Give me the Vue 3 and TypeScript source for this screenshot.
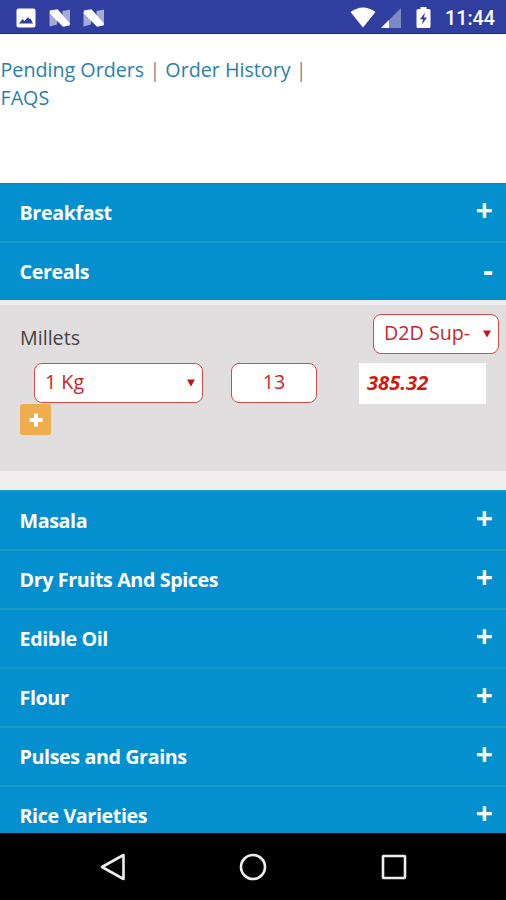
<script setup lang="ts">
interface Category {
  name: string
  open: boolean
}

const categories: Category[] = [
  { name: 'Breakfast', open: false },
  { name: 'Cereals', open: true },
  { name: 'Masala', open: false },
  { name: 'Dry Fruits And Spices', open: false },
  { name: 'Edible Oil', open: false },
  { name: 'Flour', open: false },
  { name: 'Pulses and Grains', open: false },
  { name: 'Rice Varieties', open: false },
]
</script>

<template>
  <div class="screen">
    <header class="status">
      <svg class="picture" width="20" height="20" viewBox="0 0 20 20">
        <rect x="0.5" y="0.5" width="19" height="19" rx="2" fill="#fff" />
        <path d="M3 15.5 L6.5 11 L8.5 13 L12 9 L13.5 11 L14.5 10.5 L17 15.5 Z" fill="#303f9f" />
      </svg>
      <svg v-for="n in 2" :key="n" class="nougat" width="22" height="18" viewBox="0 0 22 18">
        <path d="M0.5 3 L8 9 V15.5 L0.5 17.5 Z M13.5 2 L21 0.5 V15 L13.5 9 Z" fill="#a4abd6" />
        <path d="M0.8 1.5 L8.5 0.3 L21 14.5 L20.5 16.5 L14 17.7 L0.8 4.5 Z" fill="#fff" />
      </svg>
      <span class="spacer"></span>
      <svg class="wifi" width="26" height="21" viewBox="0 0 26 21">
        <path d="M0.5 5 Q13 -4.2 25.5 5 L13 20.5 Z" fill="#fff" />
      </svg>
      <svg class="signal" width="20" height="20" viewBox="0 0 20 20">
        <path d="M0 20 L20 0 V20 Z" fill="#7e88c4" />
        <path d="M0 20 L8 12 V20 Z" fill="#fff" />
      </svg>
      <svg class="battery" width="15" height="21" viewBox="0 0 15 21">
        <path d="M4.5 0 H10.5 V2 H13 Q14.5 2 14.5 3.5 V19.5 Q14.5 21 13 21 H2 Q0.5 21 0.5 19.5 V3.5 Q0.5 2 2 2 H4.5 Z" fill="#fff" />
        <path d="M9 5.5 L4 12.2 H7 L6 17.5 L11 10.5 H8 Z" fill="#303f9f" />
      </svg>
      <time>11:44</time>
    </header>

    <nav class="links">
      <a>Pending Orders</a> | <a>Order History</a> |<br />
      <a>FAQS</a>
    </nav>

    <main class="accordion">
      <template v-for="category in categories" :key="category.name">
        <div class="row">
          <span class="title">{{ category.name }}</span>
          <span class="sign" :class="{ minus: category.open }">{{ category.open ? '-' : '+' }}</span>
        </div>
        <section v-if="category.open" class="panel">
          <div class="line first">
            <span class="product">Millets</span>
            <div class="field supplier">
              <span>D2D Sup-</span>
              <svg width="8" height="8" viewBox="0 0 8 8"><path d="M0 0.5 H8 L4 7.5 Z" /></svg>
            </div>
          </div>
          <div class="line second">
            <div class="field weight">
              <span>1 Kg</span>
              <svg width="8" height="8" viewBox="0 0 8 8"><path d="M0 0.5 H8 L4 7.5 Z" /></svg>
            </div>
            <div class="field quantity">13</div>
            <div class="price">385.32</div>
          </div>
          <button class="add" type="button" aria-label="Add">
            <svg width="14" height="14" viewBox="0 0 14 14"><path d="M5 0.5 H9 V5 H13.5 V9 H9 V13.5 H5 V9 H0.5 V5 H5 Z" fill="#fff" /></svg>
          </button>
        </section>
      </template>
    </main>

    <footer class="navbar">
      <svg width="28" height="28" viewBox="0 0 28 28"><path d="M3 14 L24.5 2 V26 Z" /></svg>
      <svg width="28" height="28" viewBox="0 0 28 28"><circle cx="14" cy="14" r="12" /></svg>
      <svg width="28" height="28" viewBox="0 0 28 28"><rect x="3" y="3" width="22" height="22" rx="0.5" /></svg>
    </footer>
  </div>
</template>

<style>
body {
  margin: 0;
}
</style>

<style scoped>
.screen {
  display: flex;
  flex-direction: column;
  width: 506px;
  height: 900px;
  overflow: hidden;
  background: #fff;
  font-family: "Open Sans", sans-serif;
  font-size: 19.7px;
  line-height: 28px;
}
.status {
  display: flex;
  flex: none;
  align-items: center;
  box-sizing: border-box;
  height: 34px;
  padding: 2px 11px 0 16px;
  border-bottom: 1px solid #1c2894;
  background: #303f9f;
}
.picture {
  margin-right: 13px;
}
.nougat {
  margin-right: 12px;
}
.spacer {
  flex: 1;
}
.signal {
  margin: 0 15px 0 5px;
}
.battery {
  margin-right: 14px;
}
time {
  padding-top: 2px;
  color: #fff;
  font: 500 19.7px/28px Roboto, sans-serif;
}
.links {
  flex: none;
  box-sizing: border-box;
  height: 149px;
  padding: 21.5px 0 0 0.5px;
  color: #888;
}
.links a {
  color: #2a7fad;
}
.accordion {
  flex: 1;
  min-height: 0;
  overflow: hidden;
}
.row {
  display: flex;
  justify-content: space-between;
  box-sizing: border-box;
  height: 59px;
  padding: 15px 13px 0 19.5px;
  border-top: 2px solid #1a98bd;
  background: #048fcf;
  color: #fff;
  font-weight: 700;
}
.row:first-child {
  height: 58px;
  border-top: 1px solid #1482b8;
}
.title {
  letter-spacing: -0.39px;
}
.sign {
  margin-top: -1px;
  font-size: 30px;
  line-height: 24px;
}
.minus {
  margin-top: 0;
}
.panel {
  box-sizing: border-box;
  height: 190px;
  padding: 9px 7px 0 20px;
  border-top: 5px solid #eeecee;
  border-bottom: 19px solid #eeeeee;
  background: #e0dedf;
}
.line {
  display: flex;
}
.first {
  justify-content: space-between;
}
.product {
  padding-top: 10px;
  color: #444;
}
.field {
  display: flex;
  align-items: center;
  justify-content: space-between;
  box-sizing: border-box;
  height: 40px;
  padding: 0 7px 3px 10px;
  border: 1.4px solid #d9484c;
  border-radius: 8px;
  background: #fff;
  color: #c6282d;
}
.field svg {
  margin-top: 2px;
  fill: #c4141a;
}
.supplier {
  width: 126px;
}
.second {
  padding: 9px 0 0 14px;
}
.weight {
  width: 169px;
}
.quantity {
  justify-content: center;
  width: 86px;
  margin-left: 28px;
  padding: 0 0 3px;
}
.price {
  box-sizing: border-box;
  width: 127px;
  height: 41px;
  margin-left: 42px;
  padding: 5px 0 0 8px;
  background: #fff;
  color: #cf1b10;
  font-size: 20.2px;
  font-style: italic;
  font-weight: 700;
}
.add {
  display: flex;
  align-items: center;
  justify-content: center;
  width: 31px;
  height: 31px;
  padding: 0;
  border: 0;
  border-radius: 3px;
  background: #f0ad4e;
}
.navbar {
  display: flex;
  flex: none;
  align-items: center;
  justify-content: center;
  gap: 112.5px;
  box-sizing: border-box;
  height: 67px;
  background: #000;
}
.navbar svg {
  fill: none;
  stroke: #eee;
  stroke-width: 2.6;
  stroke-linejoin: round;
}
</style>
